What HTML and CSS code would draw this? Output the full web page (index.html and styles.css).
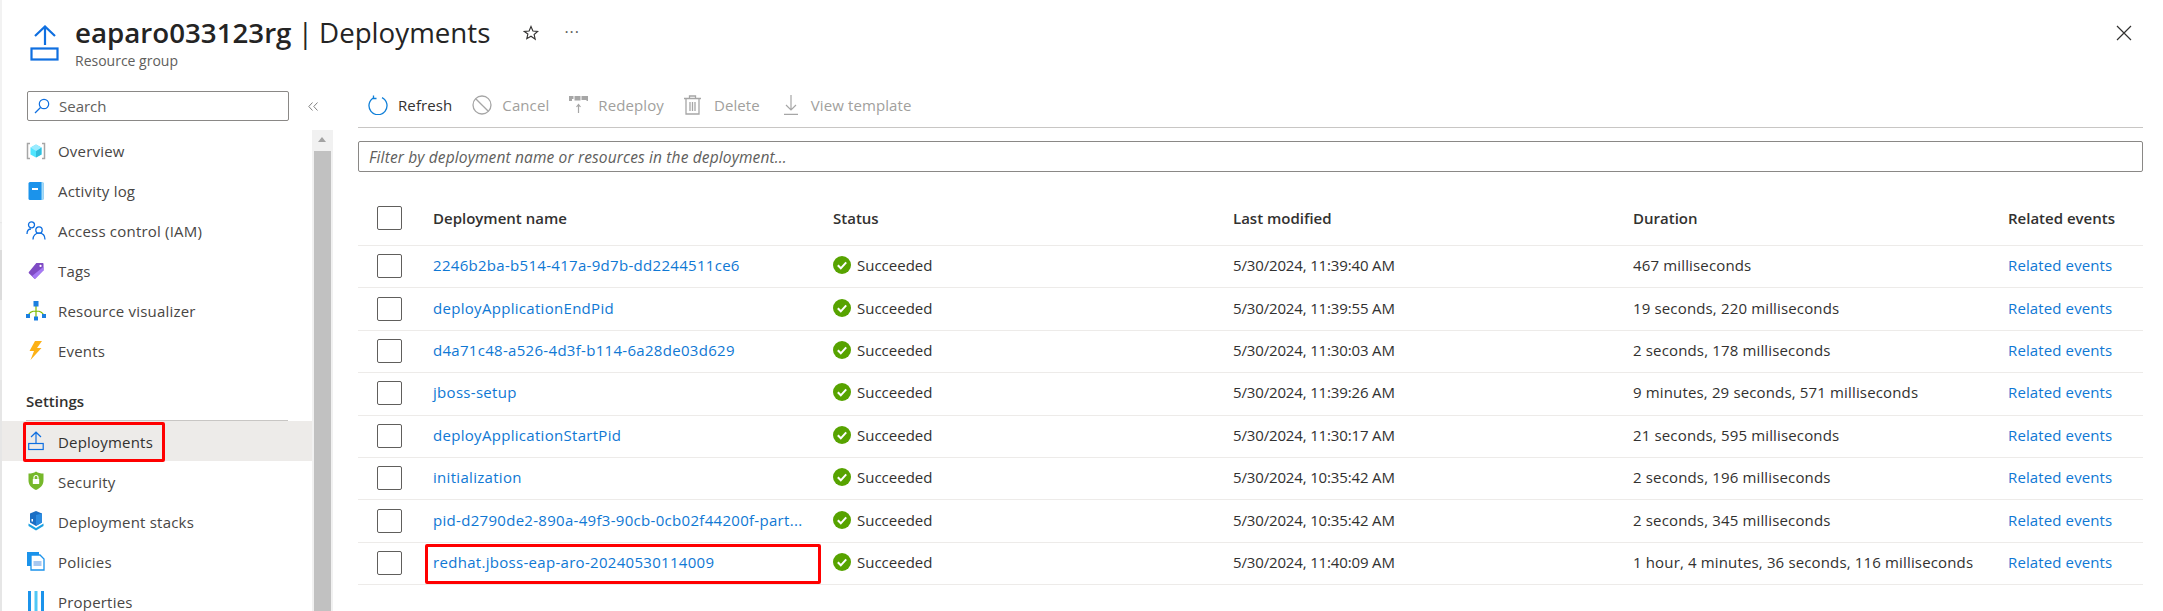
FILE: index.html
```html
<!DOCTYPE html>
<html lang="en">
<head>
<meta charset="utf-8">
<title>eaparo033123rg | Deployments</title>
<link rel="stylesheet" href="styles.css">
</head>
<body>
<div class="page">
  <header class="header">
    <svg class="header-icon" width="30" height="36" viewBox="0 0 30 36" fill="none" stroke="#0f6fe0" stroke-width="2.2"><path d="M15 20V2M5 11l10-9.500 10 9.500"/><rect x="1.500" y="23.500" width="26" height="11"/></svg>
    <div class="header-text">
      <h1 class="title"><b class="title-name">eaparo033123rg</b> | Deployments</h1>
      <div class="subtitle">Resource group</div>
    </div>
    <svg class="star" width="16" height="16" viewBox="0 0 16 16" fill="none" stroke="#323130" stroke-width="1.100"><path d="M8 1.500l1.900 4.500 4.800.4-3.600 3.100 1.100 4.700L8 11.200l-4.200 2.500 1.100-4.700L1.300 6.400l4.800-.4z"/></svg>
    <span class="more">···</span>
    <svg class="close" width="16" height="16" viewBox="0 0 16 16" fill="none" stroke="#323130" stroke-width="1.200"><path d="M1 1l14 14M15 1L1 15"/></svg>
  </header>
  <div class="content">
    <aside class="sidebar">
      <div class="search-row">
        <div class="search">
          <svg width="16" height="16" viewBox="0 0 16 16" fill="none" stroke="#0f6fe0" stroke-width="1.200"><circle cx="10" cy="6" r="4.700"/><path d="M6.500 9.500L1 15"/></svg>
          <span>Search</span>
        </div>
        <svg class="collapse" width="10" height="9" viewBox="0 0 10 9" fill="none" stroke="#808080" stroke-width="1"><path d="M4.500 .5L.8 4.500l3.700 4M9.500 .5L5.800 4.500l3.700 4"/></svg>
      </div>
      <div class="nav-wrap">
        <nav class="nav">
          <a class="nav-item"><svg class="nav-icon" width="20" height="20" viewBox="0 0 20 20"><path d="M4 2.500H1.500v15H4M16 2.500h2.500v15H16" fill="none" stroke="#a6a6a6" stroke-width="1.500"/><path d="M10 3.500l5.500 3v7L10 16.500l-5.500-3v-7z" fill="#50e6ff"/><path d="M10 10l5.500-3.500v7L10 16.500z" fill="#32bedd"/><path d="M10 3.500l5.500 3L10 10 4.500 6.500z" fill="#9cebff"/></svg>Overview</a>
          <a class="nav-item"><svg class="nav-icon" width="20" height="20" viewBox="0 0 20 20"><rect x="2.500" y="1" width="15" height="18" rx="1.500" fill="#1b93eb"/><path d="M15.500 1h1a1 1 0 0 1 1 1v16a1 1 0 0 1-1 1h-1z" fill="#a6dcf7"/><rect x="6" y="7" width="6" height="2" fill="#fff"/></svg>Activity log</a>
          <a class="nav-item"><svg class="nav-icon" width="20" height="20" viewBox="0 0 20 20" fill="none" stroke="#0f6fe0" stroke-width="1.300"><circle cx="5.500" cy="3.800" r="3"/><circle cx="13" cy="9" r="3.200"/><path d="M1 13c0-3 1.500-5 4-5M7 18.500c0-4 2.500-6.300 6-6.300s6 2.300 6 6.300"/></svg>Access control (IAM)</a>
          <a class="nav-item"><svg class="nav-icon" width="20" height="20" viewBox="0 0 20 20"><g transform="translate(1.800 1.500) scale(.85)"><path d="M10 .500h7.500a1 1 0 0 1 1 1V9L9 18.800a1 1 0 0 1-1.400 0L1.300 12.500a1 1 0 0 1 0-1.400z" fill="#7f4bc4"/><path d="M18.500 5v4L9 18.800a1 1 0 0 1-1.400 0L5 16z" fill="#a67af4"/><circle cx="15" cy="4" r="1.300" fill="#fff"/></g></svg>Tags</a>
          <a class="nav-item"><svg class="nav-icon" width="20" height="20" viewBox="0 0 20 20"><path d="M10 5v13M2 15c1-3.500 4-5 8-5s7 1.500 8 5" fill="none" stroke="#7fba00" stroke-width="1.200"/><rect x="7.500" y="0" width="5" height="5.500" fill="#1b7fe0"/><rect x="0" y="13" width="4" height="4" fill="#1b7fe0"/><rect x="16" y="13" width="4" height="4" fill="#1b7fe0"/><rect x="8" y="15.500" width="4" height="4" fill="#1b7fe0"/></svg>Resource visualizer</a>
          <a class="nav-item"><svg class="nav-icon" width="20" height="20" viewBox="0 0 20 20"><path d="M9 0h7l-5 7h4.500L4.500 19l3.500-9H3.500z" fill="#fcb116"/></svg>Events</a>
          <div class="nav-section">Settings</div>
          <a class="nav-item low active"><svg class="nav-icon" width="20" height="20" viewBox="0 0 20 20" fill="none" stroke="#0f6fe0" stroke-width="1.200"><path d="M10 13V1.500M5 6l5-4.800L15 6"/><rect x="1" y="12.500" width="14.500" height="6" transform="translate(1.700 0)"/></svg><span>Deployments</span></a>
          <a class="nav-item low"><svg class="nav-icon" width="20" height="20" viewBox="0 0 20 20"><path d="M10 .500c2 1.500 4.500 2 7.500 2v7c0 4.500-3 7.500-7.500 9.500-4.500-2-7.500-5-7.500-9.500v-7c3 0 5.500-.5 7.500-2z" fill="#76b82a"/><rect x="6.800" y="8" width="6.400" height="5" rx=".5" fill="#fff"/><path d="M8 8V6.500a2 2 0 0 1 4 0V8" fill="none" stroke="#fff" stroke-width="1.200"/></svg><span>Security</span></a>
          <a class="nav-item low"><svg class="nav-icon" width="20" height="20" viewBox="0 0 20 20"><path d="M10 0l6 2.500v9L10 15l-6-3.500v-9z" fill="#1b6fc4"/><path d="M10 4l6-1.500v9L10 15z" fill="#2b8be0"/><path d="M2.500 12.500L10 17l7.500-4.500v2.500L10 19.500 2.500 15z" fill="#1ba1e2"/><rect x="5.500" y="8" width="1.500" height="2.500" fill="#fff"/></svg><span>Deployment stacks</span></a>
          <a class="nav-item low"><svg class="nav-icon" width="20" height="20" viewBox="0 0 20 20"><rect x="1" y="1" width="12" height="14" fill="#1b93eb"/><path d="M5 4h9l4 4v11H5z" fill="#fff" stroke="#1b93eb" stroke-width="1.300"/><rect x="7.500" y="10" width="8" height="5" fill="#a8c8f0"/></svg><span>Policies</span></a>
          <a class="nav-item low"><svg class="nav-icon" width="20" height="20" viewBox="0 0 20 20"><rect x="2" y="0" width="3" height="20" fill="#1b93eb"/><rect x="8.500" y="0" width="3" height="20" fill="#50c8f5"/><rect x="15" y="0" width="3" height="20" fill="#1b93eb"/></svg><span>Properties</span></a>
        </nav>
        <div class="scrollbar">
          <span class="scroll-arrow"></span>
          <span class="scroll-thumb"></span>
        </div>
      </div>
    </aside>
    <main class="main">
      <div class="toolbar">
        <button class="tool tool-on"><svg width="20" height="20" viewBox="0 0 20 20" fill="none" stroke="#0f7fd8" stroke-width="1.300"><path d="M6 2.600A9 9 0 1 0 14 2.600"/><path d="M5.500 .5v3h3" /></svg>Refresh</button>
        <button class="tool"><svg width="20" height="20" viewBox="0 0 20 20" fill="none" stroke="#a6a6a6" stroke-width="1.300"><circle cx="10" cy="10" r="9"/><path d="M3.700 3.700l12.600 12.600"/></svg>Cancel</button>
        <button class="tool"><svg width="19" height="18" viewBox="0 0 19 18"><path d="M0 0h4.500v3H3v2H0zM5.500 0h6v4.500h-6zM12.500 0H19v5h-1.500V4h-5z" fill="#a6a6a6"/><path d="M9.500 17V8.500M7.500 11l2-2.500 2 2.500" fill="none" stroke="#a6a6a6" stroke-width="1.200"/></svg>Redeploy</button>
        <button class="tool tool-wide"><svg width="17" height="20" viewBox="0 0 17 20" fill="none" stroke="#a6a6a6" stroke-width="1.300"><path d="M0 3.500h17M5.500 3.500V1h6v2.500M2 3.500V19h13V3.500M6 7v9M8.500 7v9M11 7v9"/></svg>Delete</button>
        <button class="tool tool-wide"><svg width="14" height="20" viewBox="0 0 14 20" fill="none" stroke="#a6a6a6" stroke-width="1.200"><path d="M7 0v15M2 10l5 5 5-5M0 19.400h14"/></svg>View template</button>
      </div>
      <div class="filter">Filter by deployment name or resources in the deployment...</div>
      <div class="table">
        <div class="row head">
          <span class="check"></span><span>Deployment name</span><span>Status</span><span>Last modified</span><span>Duration</span><span>Related events</span>
        </div>
        <div class="row">
          <span class="check"></span><a class="link name">2246b2ba-b514-417a-9d7b-dd2244511ce6</a>
          <span class="status"><svg class="ok" width="18" height="18" viewBox="0 0 18 18"><circle cx="9" cy="9" r="9" fill="#57a300"/><path d="M4.800 9.300l3 3 5.400-6" fill="none" stroke="#fff" stroke-width="2"/></svg>Succeeded</span>
          <span class="date">5/30/2024, 11:39:40 AM</span><span class="dur">467 milliseconds</span><a class="link">Related events</a>
        </div>
        <div class="row">
          <span class="check"></span><a class="link name">deployApplicationEndPid</a>
          <span class="status"><svg class="ok" width="18" height="18" viewBox="0 0 18 18"><circle cx="9" cy="9" r="9" fill="#57a300"/><path d="M4.800 9.300l3 3 5.400-6" fill="none" stroke="#fff" stroke-width="2"/></svg>Succeeded</span>
          <span class="date">5/30/2024, 11:39:55 AM</span><span class="dur">19 seconds, 220 milliseconds</span><a class="link">Related events</a>
        </div>
        <div class="row">
          <span class="check"></span><a class="link name">d4a71c48-a526-4d3f-b114-6a28de03d629</a>
          <span class="status"><svg class="ok" width="18" height="18" viewBox="0 0 18 18"><circle cx="9" cy="9" r="9" fill="#57a300"/><path d="M4.800 9.300l3 3 5.400-6" fill="none" stroke="#fff" stroke-width="2"/></svg>Succeeded</span>
          <span class="date">5/30/2024, 11:30:03 AM</span><span class="dur">2 seconds, 178 milliseconds</span><a class="link">Related events</a>
        </div>
        <div class="row">
          <span class="check"></span><a class="link name">jboss-setup</a>
          <span class="status"><svg class="ok" width="18" height="18" viewBox="0 0 18 18"><circle cx="9" cy="9" r="9" fill="#57a300"/><path d="M4.800 9.300l3 3 5.400-6" fill="none" stroke="#fff" stroke-width="2"/></svg>Succeeded</span>
          <span class="date">5/30/2024, 11:39:26 AM</span><span class="dur">9 minutes, 29 seconds, 571 milliseconds</span><a class="link">Related events</a>
        </div>
        <div class="row">
          <span class="check"></span><a class="link name">deployApplicationStartPid</a>
          <span class="status"><svg class="ok" width="18" height="18" viewBox="0 0 18 18"><circle cx="9" cy="9" r="9" fill="#57a300"/><path d="M4.800 9.300l3 3 5.400-6" fill="none" stroke="#fff" stroke-width="2"/></svg>Succeeded</span>
          <span class="date">5/30/2024, 11:30:17 AM</span><span class="dur">21 seconds, 595 milliseconds</span><a class="link">Related events</a>
        </div>
        <div class="row">
          <span class="check"></span><a class="link name">initialization</a>
          <span class="status"><svg class="ok" width="18" height="18" viewBox="0 0 18 18"><circle cx="9" cy="9" r="9" fill="#57a300"/><path d="M4.800 9.300l3 3 5.400-6" fill="none" stroke="#fff" stroke-width="2"/></svg>Succeeded</span>
          <span class="date">5/30/2024, 10:35:42 AM</span><span class="dur">2 seconds, 196 milliseconds</span><a class="link">Related events</a>
        </div>
        <div class="row">
          <span class="check"></span><a class="link name">pid-d2790de2-890a-49f3-90cb-0cb02f44200f-part...</a>
          <span class="status"><svg class="ok" width="18" height="18" viewBox="0 0 18 18"><circle cx="9" cy="9" r="9" fill="#57a300"/><path d="M4.800 9.300l3 3 5.400-6" fill="none" stroke="#fff" stroke-width="2"/></svg>Succeeded</span>
          <span class="date">5/30/2024, 10:35:42 AM</span><span class="dur">2 seconds, 345 milliseconds</span><a class="link">Related events</a>
        </div>
        <div class="row highlighted">
          <span class="check"></span><a class="link name">redhat.jboss-eap-aro-20240530114009</a>
          <span class="status"><svg class="ok" width="18" height="18" viewBox="0 0 18 18"><circle cx="9" cy="9" r="9" fill="#57a300"/><path d="M4.800 9.300l3 3 5.400-6" fill="none" stroke="#fff" stroke-width="2"/></svg>Succeeded</span>
          <span class="date">5/30/2024, 11:40:09 AM</span><span class="dur">1 hour, 4 minutes, 36 seconds, 116 milliseconds</span><a class="link">Related events</a>
        </div>
      </div>
    </main>
  </div>
</div>
</body>
</html>
```
FILE: styles.css
```css
*, *::before, *::after { box-sizing: border-box; }
html, body { margin: 0; padding: 0; height: 100%; overflow: hidden; background: #fff; }
body { font-family: "Open Sans", "Noto Sans", sans-serif; font-size: 15px; color: #323130; }
.page { height: 611px; border-left: 2px solid; border-image: linear-gradient(to bottom, #f2f2f2 0, #f2f2f2 222px, #e2e2e2 222px, #f0f0f0 224px, #f0f0f0 250px, #dcdcdc 250px, #dcdcdc 300px, #ececec 300px, #ececec 380px, #e6e6e6 380px, #e6e6e6 611px) 1; display: flex; flex-direction: column; overflow: hidden; }

.header { height: 91px; flex: none; display: flex; align-items: flex-start; position: relative; padding: 25px 0 0 28px; }
.header-icon { flex: none; }
.header-text { margin-left: 15px; margin-top: -12px; }
.title { margin: 0; font-size: 27.700px; line-height: 38px; font-weight: 400; word-spacing: -1px; color: #242424; }
.title-name { font-weight: 600; }
.subtitle { font-size: 14px; line-height: 18px; color: #605e5c; margin-top: 1px; }
.star { margin-left: 33px; flex: none; }
.more { margin-left: 25px; margin-top: -3px; font-size: 16px; line-height: 20px; letter-spacing: 1px; color: #605e5c; }
.close { position: absolute; top: 25px; right: 31px; }

.content { flex: 1; display: flex; min-height: 0; }
.sidebar { width: 331px; flex: none; display: flex; flex-direction: column; }
.search-row { display: flex; align-items: center; height: 30px; padding-left: 25px; flex: none; }
.search { width: 262px; height: 30px; border: 1px solid #8a8886; border-radius: 2px; display: flex; align-items: center; gap: 9px; padding-left: 6px; color: #605e5c; font-size: 15px; }
.collapse { margin-left: 19px; flex: none; }
.nav-wrap { flex: 1; display: flex; margin-top: 9px; min-height: 0; }
.nav { width: 310px; flex: none; padding-top: 1px; }
.nav-item { display: flex; align-items: center; height: 40px; padding-left: 24px; gap: 12px; font-size: 15px; letter-spacing: .2px; color: #484644; }
.nav-item.low span { margin-top: 2px; }
.nav-icon { flex: none; }
.nav-section { height: 50px; margin: 0 24px; padding-top: 20px; line-height: 20px; font-weight: 600; font-size: 15px; border-bottom: 1px solid #c8c6c4; color: #323130; }
.nav-item.active { background: #edebe9; color: #323130; position: relative; }
.nav-item.active::after { content: ""; position: absolute; left: 21px; top: 1px; width: 142px; height: 40px; border: 3px solid #f00; border-radius: 2px; }
.scrollbar { width: 21px; flex: none; background: #f1f1f1; display: flex; flex-direction: column; align-items: center; }
.scroll-arrow { flex: none; height: 21px; width: 100%; position: relative; }
.scroll-arrow::after { content: ""; position: absolute; left: 6px; top: 7px; border: 4.500px solid transparent; border-top: 0; border-bottom: 5px solid #a3a3a3; }
.scroll-thumb { flex: 1; width: 17px; background: #c1c1c1; }

.main { width: 1785px; margin-left: 25px; flex: none; }
.toolbar { height: 37px; border-bottom: 1px solid #c8c6c4; display: flex; align-items: center; padding: 0 0 8px 10px; }
.tool { display: flex; align-items: center; gap: 10px; border: 0; background: none; padding: 0; margin-right: 20px; font: inherit; font-size: 15px; letter-spacing: .1px; color: #a19f9d; }
.tool-wide { gap: 13px; margin-right: 24px; }
.tool-on { color: #323130; }
.filter { margin-top: 13px; height: 31px; border: 1px solid #8a8886; border-radius: 2px; padding-left: 10px; line-height: 31px; font-style: italic; font-size: 15.500px; letter-spacing: .14px; color: #605e5c; }

.table { margin-top: 26px; }
.row { display: grid; grid-template-columns: 75px 400px 400px 400px 375px 135px; align-items: center; height: 42.400px; padding-bottom: 1px; border-bottom: 1px solid #edebe9; color: #323130; white-space: nowrap; }
.row > :not(.check) { padding-bottom: 2px; }
.row.head { height: 48px; padding-bottom: 7px; font-weight: 600; }
.row.head > :not(.check) { padding-bottom: 0; }
.check { width: 25px; height: 24px; margin-left: 19px; border: 1px solid #605e5c; border-radius: 2px; background: #fff; }
.link { color: #0f78d4; letter-spacing: .12px; }
.link.name { letter-spacing: .3px; }
.date { letter-spacing: -.15px; }
.dur { letter-spacing: .15px; }
.status { display: flex; align-items: center; gap: 6px; }
.ok { flex: none; }
.highlighted { position: relative; }
.highlighted::after { content: ""; position: absolute; left: 67px; top: 1px; width: 396px; height: 40px; border: 3px solid #f00; border-radius: 2px; }
```
